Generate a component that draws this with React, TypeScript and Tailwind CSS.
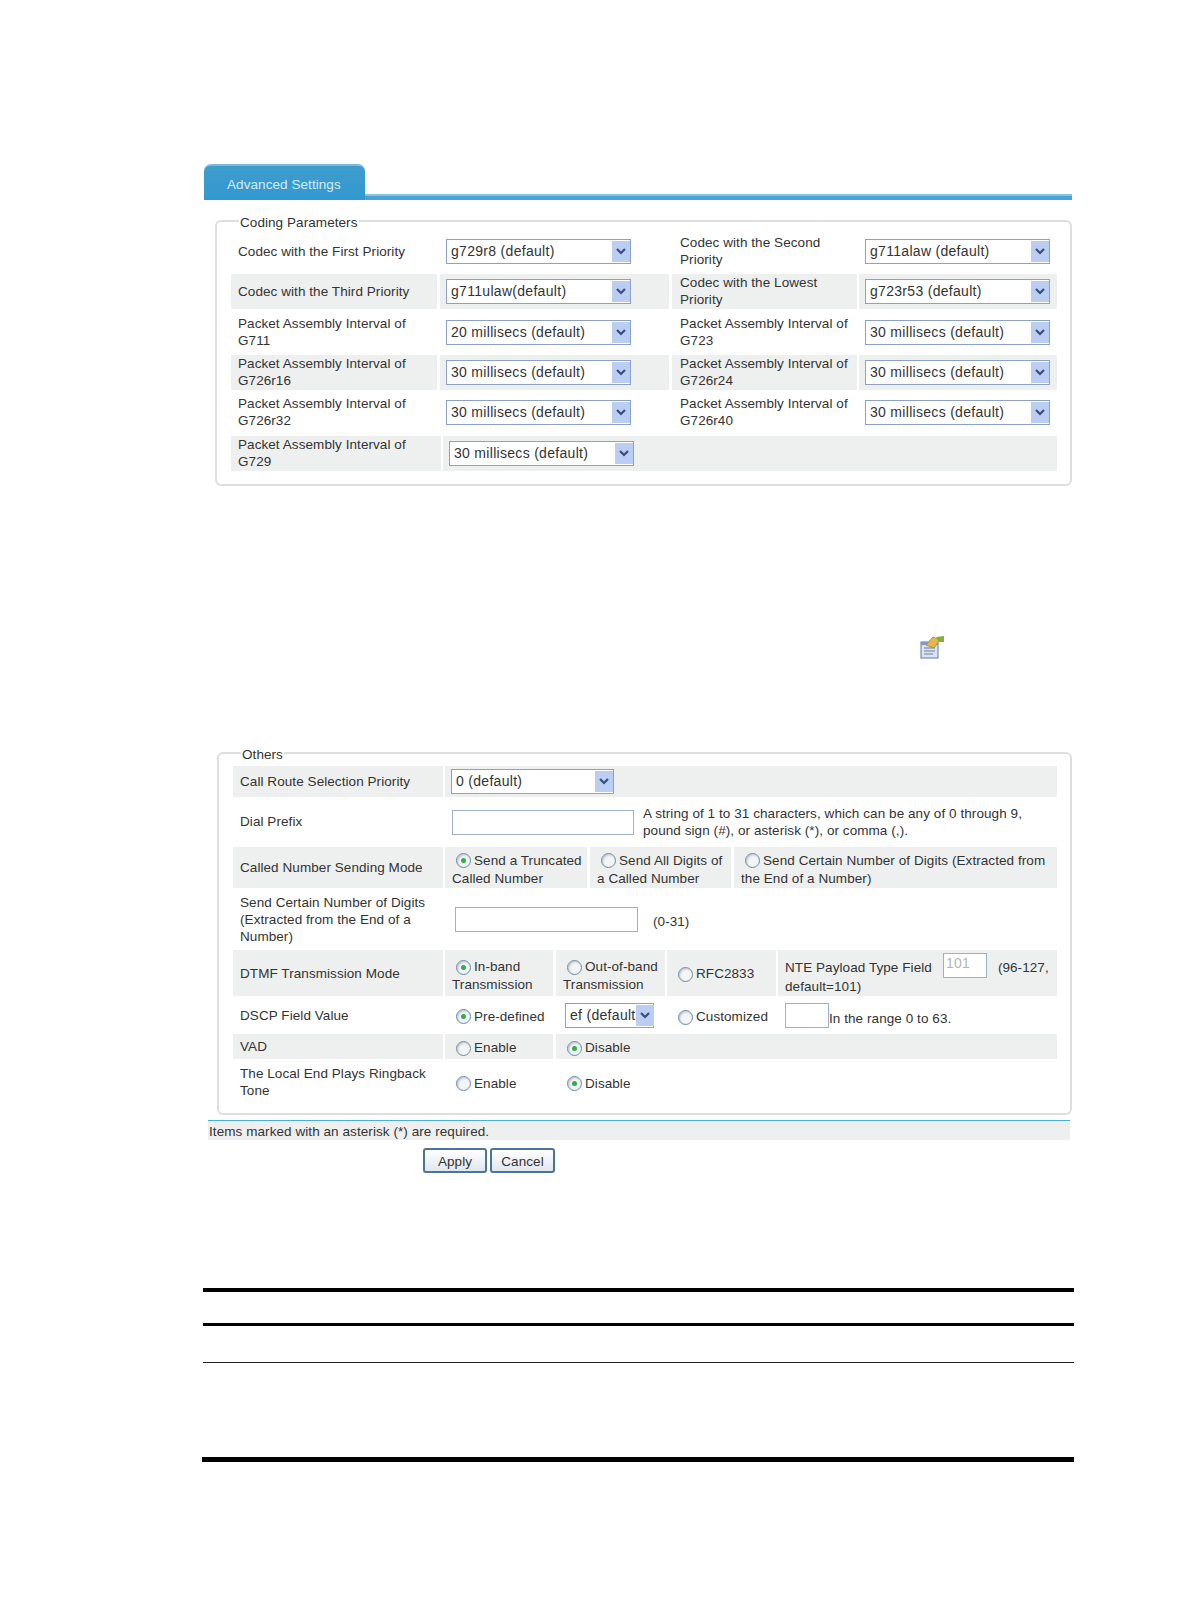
import React from "react";

const Chevron = () => (
  <svg width="12" height="9" viewBox="0 0 12 9" fill="none">
    <path d="M2 2 L6 6 L10 2" stroke="#34507f" strokeWidth="2.2" />
  </svg>
);

const Select = ({ value, className = "" }: { value: string; className?: string }) => (
  <div className={`flex h-[25px] items-center justify-between border border-[#8ba2c4] bg-white pl-[4px] ${className}`}>
    <span className="whitespace-nowrap text-[14px] tracking-[0.3px] text-[#333]">{value}</span>
    <span className="flex h-[21px] w-[18px] shrink-0 items-center justify-center bg-[#bccdf3]">
      <Chevron />
    </span>
  </div>
);

const Radio = ({ on = false }: { on?: boolean }) => (
  <span className="mr-[3px] ml-[4px] inline-flex h-[15px] w-[15px] items-center justify-center rounded-full border border-[#6f8aa6] bg-[#f3f5f7] align-middle shadow-[inset_1px_1px_2px_#b9c0c8]">
    {on && <span className="h-[5px] w-[5px] rounded-full bg-[#2fae4a]" />}
  </span>
);

const Input = ({ className = "", value }: { className?: string; value?: string }) => (
  <div className={`h-[25px] shrink-0 border border-[#9fb0c6] bg-white pl-[2px] text-[14px] leading-[19px] tracking-[0.3px] text-[#b5b5b5] ${className}`}>
    {value}
  </div>
);

const Cell = ({ className = "", children }: { className?: string; children?: React.ReactNode }) => (
  <div className={`flex h-full shrink-0 items-center pl-[7px] ${className}`}>
    <div className="whitespace-nowrap">{children}</div>
  </div>
);

const codingRows = [
  ["Codec with the First Priority", "g729r8 (default)", "Codec with the Second", "Priority", "g711alaw (default)"],
  ["Codec with the Third Priority", "g711ulaw(default)", "Codec with the Lowest", "Priority", "g723r53 (default)"],
  ["Packet Assembly Interval of|G711", "20 millisecs (default)", "Packet Assembly Interval of", "G723", "30 millisecs (default)"],
  ["Packet Assembly Interval of|G726r16", "30 millisecs (default)", "Packet Assembly Interval of", "G726r24", "30 millisecs (default)"],
  ["Packet Assembly Interval of|G726r32", "30 millisecs (default)", "Packet Assembly Interval of", "G726r40", "30 millisecs (default)"],
];

const Lines = ({ text }: { text: string }) => (
  <>
    {text.split("|").map((line, i) => (
      <div key={i}>{line}</div>
    ))}
  </>
);

export default function App() {
  return (
    <div className="h-[1616px] w-[1190px] overflow-hidden bg-white pt-[164px] font-['Liberation_Sans',Arial,sans-serif] text-[13.5px] leading-[17px] tracking-[0.07px] text-[#333]">
      {/* tab header */}
      <div className="ml-[204px] flex w-[868px] items-end">
        <div className="flex h-[36px] w-[161px] items-center rounded-t-[7px] border-t-2 border-[#7dbbdc] bg-gradient-to-b from-[#3f9ccd] to-[#3199cf] pt-[3px] pl-[23px] text-[#d5edf9]">
          Advanced Settings
        </div>
        <div className="h-[6px] flex-1 border-t-2 border-[#88c4e2] bg-[#4ba5d4]" />
      </div>

      {/* coding parameters */}
      <fieldset className="mt-[12px] ml-[215px] h-[274px] w-[857px] rounded-[6px] border-2 border-[#dcdfdc] pl-[14px]">
        <legend className="relative top-[2px] ml-[8px] px-[1px]">Coding Parameters</legend>
        <div className="mt-[5px] flex w-[826px] flex-col gap-[5.33px]">
          {codingRows.map((r, i) => {
            const bg = i % 2 === 1 ? "bg-[#eef0f0]" : "";
            return (
              <div key={i} className="flex h-[35px] items-center">
                <Cell className={`w-[206px] pb-[1px] ${bg}`}>
                  <Lines text={r[0]} />
                </Cell>
                <div className={`ml-[3px] flex h-full w-[229px] items-center pl-[6px] ${bg}`}>
                  <Select value={r[1]} className="w-[185px]" />
                </div>
                <Cell className={`ml-[3px] w-[185px] pb-[1px] pl-[8px] ${bg}`}>
                  <div>{r[2]}</div>
                  <div>{r[3]}</div>
                </Cell>
                <div className={`ml-[2px] flex h-full w-[198px] items-center pl-[6px] ${bg}`}>
                  <Select value={r[4]} className="w-[185px]" />
                </div>
              </div>
            );
          })}
          <div className="flex h-[35px] items-center">
            <Cell className="w-[210px] bg-[#eef0f0]">
              <Lines text="Packet Assembly Interval of|G729" />
            </Cell>
            <div className="ml-[2px] flex h-full w-[614px] items-center bg-[#eef0f0] pl-[6px]">
              <Select value="30 millisecs (default)" className="w-[185px]" />
            </div>
          </div>
        </div>
      </fieldset>

      {/* icon line */}
      <div className="mt-[149px] ml-[920px] h-[24px] w-[24px]">
        <svg width="24" height="24" viewBox="0 0 24 24">
          <rect x="1" y="7" width="17" height="16" fill="#dbe4f5" stroke="#5f78ad" />
          <rect x="1" y="7" width="17" height="3" fill="#7f98cf" />
          <path d="M4 13h11M4 16h11M4 19h9" stroke="#6f7f98" strokeWidth="1.2" />
          <path d="M6 10 L13 2 L20 5 L14 13 Z" fill="#e2b84a" stroke="#a98422" strokeWidth="0.8" />
          <path d="M16 2 L24 1 L24 7 L19 7 Z" fill="#7fb23a" />
        </svg>
      </div>

      {/* others */}
      <fieldset className="mt-[85px] ml-[217px] h-[371px] w-[855px] rounded-[6px] border-2 border-[#dcdfdc] pl-[14px]">
        <legend className="relative top-[2px] ml-[8px] px-[1px]">Others</legend>
        <div className="flex w-[824px] flex-col">
          <div className="mt-[5px] flex h-[31px] items-center">
            <Cell className="w-[210px] bg-[#eef0f0]">Call Route Selection Priority</Cell>
            <div className="ml-[2px] flex h-full w-[612px] items-center bg-[#eef0f0] pl-[6px]">
              <Select value="0 (default)" className="w-[163px]" />
            </div>
          </div>

          <div className="mt-[4px] flex h-[42px] items-center">
            <Cell className="w-[210px] pb-[2px]">Dial Prefix</Cell>
            <div className="ml-[2px] flex h-full items-center pl-[7px]">
              <Input className="h-[24px] w-[182px]" />
              <div className="ml-[9px] whitespace-nowrap">
                <div>A string of 1 to 31 characters, which can be any of 0 through 9,</div>
                <div>pound sign (#), or asterisk (*), or comma (,).</div>
              </div>
            </div>
          </div>

          <div className="mt-[4px] flex h-[41px] items-center leading-[18px]">
            <Cell className="w-[210px] bg-[#eef0f0]">Called Number Sending Mode</Cell>
            <Cell className="ml-[2px] w-[142px] bg-[#eef0f0] pt-[4px]">
              <Radio on />Send a Truncated<br />Called Number
            </Cell>
            <Cell className="ml-[3px] w-[141px] bg-[#eef0f0] pt-[4px]">
              <Radio />Send All Digits of<br />a Called Number
            </Cell>
            <Cell className="ml-[3px] w-[323px] bg-[#eef0f0] pt-[4px]">
              <Radio />Send Certain Number of Digits (Extracted from<br />the End of a Number)
            </Cell>
          </div>

          <div className="mt-[4px] flex h-[54px] items-center">
            <Cell className="w-[210px]">
              Send Certain Number of Digits<br />(Extracted from the End of a<br />Number)
            </Cell>
            <div className="ml-[12px] flex items-center">
              <Input className="w-[183px]" />
              <span className="mt-[4px] ml-[15px]">(0-31)</span>
            </div>
          </div>

          <div className="mt-[4px] flex h-[46px] items-center leading-[18px]">
            <Cell className="w-[210px] bg-[#eef0f0] pt-[2px]">DTMF Transmission Mode</Cell>
            <Cell className="ml-[2px] w-[108px] bg-[#eef0f0] pt-[6px]">
              <Radio on />In-band<br />Transmission
            </Cell>
            <Cell className="ml-[3px] w-[109px] bg-[#eef0f0] pt-[6px]">
              <Radio />Out-of-band<br />Transmission
            </Cell>
            <Cell className="ml-[2px] w-[109px] bg-[#eef0f0] pt-[2px]">
              <Radio />RFC2833
            </Cell>
            <div className="ml-[2px] h-full w-[279px] bg-[#eef0f0] pt-[3px] pl-[7px]">
              <div className="flex items-center whitespace-nowrap">
                <span className="mt-[5px]">NTE Payload Type Field</span>
                <Input className="ml-[11px] h-[24px] w-[44px]" value="101" />
                <span className="mt-[5px] ml-[11px]">(96-127,</span>
              </div>
              <div>default=101)</div>
            </div>
          </div>

          <div className="flex h-[38px] items-center">
            <Cell className="w-[210px]">DSCP Field Value</Cell>
            <Cell className="ml-[2px] w-[108px] pt-[2px]">
              <Radio on />Pre-defined
            </Cell>
            <div className="ml-[12px] w-[89px]">
              <Select value="ef (default" className="w-[89px]" />
            </div>
            <Cell className="ml-[13px] w-[109px] pt-[3px]">
              <Radio />Customized
            </Cell>
            <div className="ml-[9px] flex items-center">
              <Input className="w-[44px]" />
              <span className="mt-[6px] whitespace-nowrap">In the range 0 to 63.</span>
            </div>
          </div>

          <div className="flex h-[25px] items-center">
            <Cell className="w-[210px] bg-[#eef0f0]">VAD</Cell>
            <Cell className="ml-[2px] w-[108px] bg-[#eef0f0] pt-[2px]">
              <Radio />Enable
            </Cell>
            <Cell className="ml-[3px] w-[501px] bg-[#eef0f0] pt-[2px]">
              <Radio on />Disable
            </Cell>
          </div>

          <div className="mt-[2px] flex h-[44px] items-center">
            <Cell className="w-[210px] pb-[2px]">
              The Local End Plays Ringback<br />Tone
            </Cell>
            <Cell className="ml-[2px] w-[108px]">
              <Radio />Enable
            </Cell>
            <Cell className="ml-[3px] w-[200px]">
              <Radio on />Disable
            </Cell>
          </div>
        </div>
      </fieldset>

      {/* required note */}
      <div className="mt-[5px] ml-[208px] h-[20px] w-[862px] border-t border-[#48aedb] bg-[#eef0f0] pt-[1px] pl-[1px] leading-[20px]">
        Items marked with an asterisk (*) are required.
      </div>

      <div className="mt-[8px] ml-[423px] flex gap-[3px]">
        <button className="h-[25px] w-[64px] rounded-[3px] border-2 border-[#4f7395] bg-gradient-to-b from-white to-[#dfe7ee] pt-[2px] text-[#333]">Apply</button>
        <button className="h-[25px] w-[65px] rounded-[3px] border-2 border-[#4f7395] bg-gradient-to-b from-white to-[#dfe7ee] pt-[2px] text-[#333]">Cancel</button>
      </div>

      {/* empty table rules */}
      <div className="mt-[115px] ml-[203px] w-[871px]">
        <div className="h-[4px] bg-black" />
        <div className="mt-[31px] h-[3px] bg-black" />
        <div className="mt-[36px] h-px bg-[#222]" />
        <div className="mt-[94px] ml-[-1px] h-[5px] bg-black" />
      </div>
    </div>
  );
}
